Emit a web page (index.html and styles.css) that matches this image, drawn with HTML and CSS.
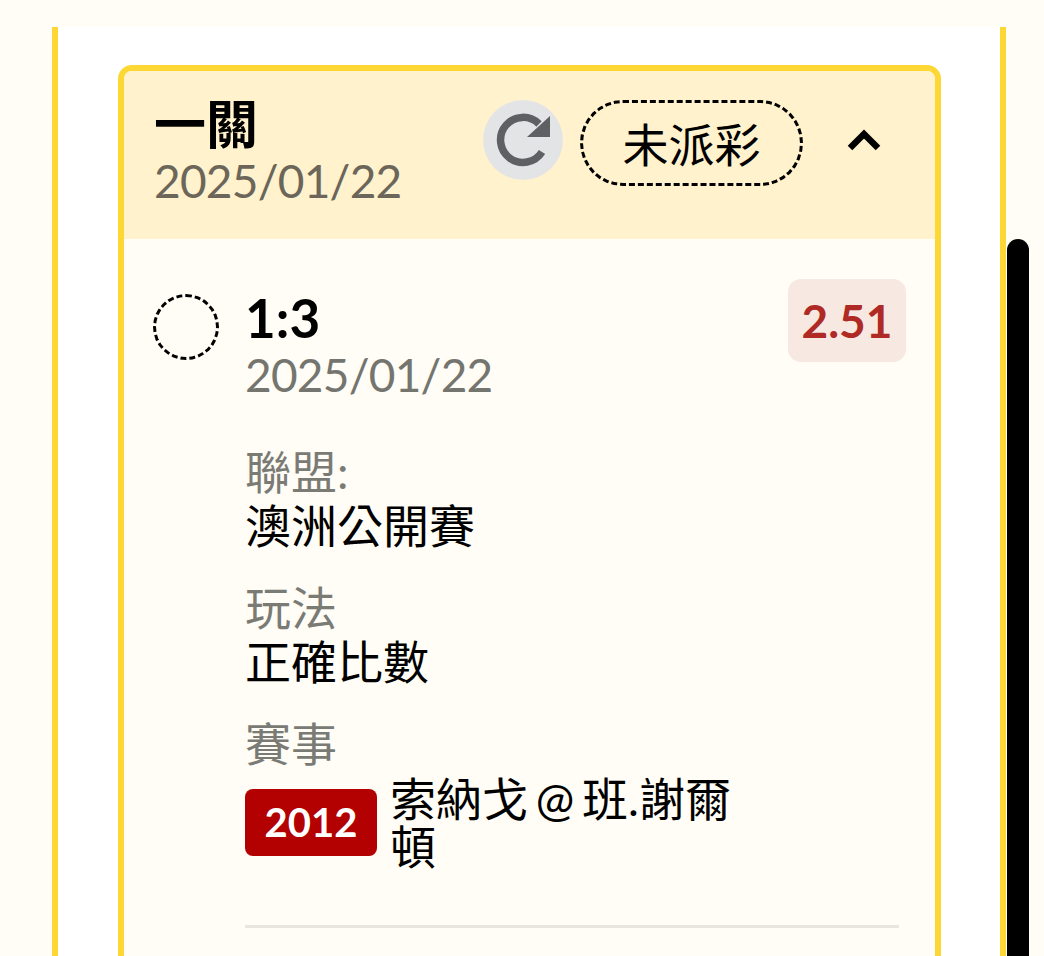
FILE: index.html
```html
<!DOCTYPE html>
<html lang="zh-Hant">
<head>
    <meta charset="UTF-8">
    <meta name="viewport" content="width=device-width, initial-scale=1.0">
    <title>一關</title>
    <link rel="stylesheet" href="styles.css">
</head>
<body>
    <div class="panel">
        <div class="card">
            <div class="card-header">
                <div class="card-title">
                    <div class="title">一關</div>
                    <div class="date">2025/01/22</div>
                </div>
                <button class="refresh">
                    <svg width="80" height="80" viewBox="0 0 80 80">
                        <path d="M56 24A22.500 22.500 0 1 0 59 52" fill="none" stroke="#5f6064" stroke-width="7.500"/>
                        <path d="M67 16V37H44Z" fill="#5f6064"/>
                    </svg>
                </button>
                <div class="status">未派彩</div>
                <svg class="chevron" width="34" height="24" viewBox="0 0 34 24">
                    <path d="M3 20L17 6L31 20" fill="none" stroke="#000" stroke-width="6.500"/>
                </svg>
            </div>
            <div class="card-body">
                <div class="bet">
                    <div class="radio"></div>
                    <div class="bet-main">
                        <div class="bet-top">
                            <div>
                                <div class="title">1:3</div>
                                <div class="date date-item">2025/01/22</div>
                            </div>
                            <div class="odds">2.51</div>
                        </div>
                        <div class="field">
                            <div class="label">聯盟:</div>
                            <div class="value">澳洲公開賽</div>
                        </div>
                        <div class="field">
                            <div class="label">玩法</div>
                            <div class="value">正確比數</div>
                        </div>
                        <div class="field">
                            <div class="label">賽事</div>
                            <div class="event">
                                <span class="tag">2012</span>
                                <span class="event-name">索納戈 @ 班.謝爾頓</span>
                            </div>
                        </div>
                        <div class="divider"></div>
                    </div>
                </div>
            </div>
        </div>
    </div>
    <div class="scrollbar"></div>
</body>
</html>
```

FILE: styles.css
```css
html, body {
    height: 100%;
}
body {
    margin: 0;
    overflow: hidden;
    background-color: #fffdf5;
    font-family: Lato, "Noto Sans CJK TC", sans-serif;
    color: #000;
}
.panel {
    box-sizing: border-box;
    width: 954px;
    height: 929px;
    margin: 27px 0 0 52px;
    padding: 38px 59px 0 60px;
    background: #fff;
    border-left: 6px solid #fdd835;
    border-right: 6px solid #fdd835;
    overflow: hidden;
}
.card {
    border: 6px solid #fdd835;
    border-radius: 14px;
    background: #fffdf5;
    height: 1000px;
}
.card-header {
    display: flex;
    align-items: flex-start;
    height: 168px;
    padding: 25px 0 0 30px;
    box-sizing: border-box;
    background: #fff2cc;
    border-radius: 8px 8px 0 0;
}
.card-title {
    width: 329px;
}
.title {
    font-size: 52px;
    font-weight: 700;
    line-height: 56px;
}
.date {
    margin-top: 4px;
    font-size: 46px;
    line-height: 50px;
    letter-spacing: -0.75px;
    color: #6b6659;
}
.refresh {
    width: 80px;
    height: 80px;
    padding: 0;
    margin-top: 4px;
    border: none;
    border-radius: 50%;
    background: #e3e4e6;
}
.refresh svg {
    display: block;
}
.status {
    box-sizing: border-box;
    width: 223px;
    height: 86px;
    margin: 4px 0 0 17px;
    border: 3px dashed #000;
    border-radius: 43px;
    font-size: 46px;
    line-height: 84px;
    text-align: center;
}
.chevron {
    margin: 32px 0 0 44px;
}
.card-body {
    padding: 40px 29px 0 29px;
}
.bet {
    display: flex;
    gap: 26px;
}
.radio {
    box-sizing: border-box;
    flex: none;
    width: 66px;
    height: 66px;
    margin-top: 15px;
    border: 3px dashed #000;
    border-radius: 50%;
}
.bet-main {
    flex: 1;
}
.bet-top {
    display: flex;
    justify-content: space-between;
    align-items: flex-start;
    padding-bottom: 45px;
}
.bet-top .title {
    margin-top: 11px;
    font-size: 53px;
}
.date-item {
    color: #757570;
}
.odds {
    box-sizing: border-box;
    width: 118px;
    height: 83px;
    border-radius: 13px;
    background: #f7e8e2;
    color: #b02a25;
    font-size: 46px;
    font-weight: 700;
    line-height: 83px;
    text-align: center;
}
.field {
    margin-bottom: 28px;
}
.label, .value {
    font-size: 46px;
    line-height: 54px;
}
.label {
    color: #7b7b76;
}
.event {
    display: flex;
    align-items: flex-start;
    gap: 13px;
    margin-top: 4px;
}
.tag {
    flex: none;
    width: 132px;
    height: 67px;
    margin-top: 14px;
    border-radius: 8px;
    background: #b30000;
    color: #fff;
    font-size: 40px;
    font-weight: 700;
    line-height: 67px;
    text-align: center;
}
.event-name {
    width: 350px;
    font-size: 46px;
    line-height: 48px;
    word-spacing: -4px;
}
.divider {
    height: 3px;
    margin: 54px 7px 0 0;
    background: #e8e6df;
}
.scrollbar {
    position: absolute;
    left: 1007px;
    top: 239px;
    width: 22px;
    height: 760px;
    border-radius: 11px;
    background: #000;
}
```
